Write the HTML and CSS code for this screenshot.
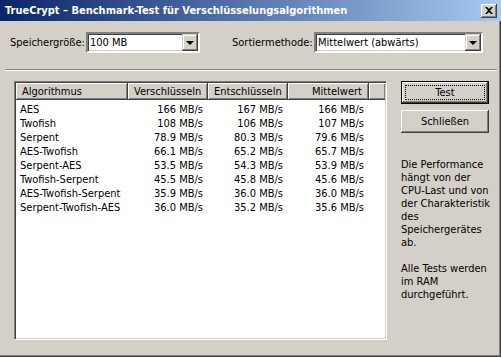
FILE: index.html
```html
<!DOCTYPE html>
<html lang="de">
<head>
    <meta charset="UTF-8">
    <title>TrueCrypt – Benchmark-Test für Verschlüsselungsalgorithmen</title>
    <link rel="stylesheet" href="styles.css">
</head>
<body>
    <div class="window">
        <div class="titlebar">
            <span class="title">TrueCrypt – Benchmark-Test für Verschlüsselungsalgorithmen</span>
            <button class="close">
                <svg width="8" height="7" viewBox="0 0 8 7"><path d="M0 0h2l2 2 2-2h2L5 3.5 8 7H6L4 5 2 7H0l3-3.5z" fill="#000"/></svg>
            </button>
        </div>

        <div class="options">
            <label class="label label-size">Speichergröße:</label>
            <div class="combo combo-size">
                <span class="combo-text">100 MB</span>
                <span class="combo-btn"><span class="arrow"></span></span>
            </div>
            <label class="label label-sort">Sortiermethode:</label>
            <div class="combo combo-sort">
                <span class="combo-text">Mittelwert (abwärts)</span>
                <span class="combo-btn"><span class="arrow"></span></span>
            </div>
        </div>

        <div class="separator"></div>

        <div class="main">
            <div class="listview">
                <table>
                    <thead>
                        <tr>
                            <th class="col-name">Algorithmus</th>
                            <th class="col-num">Verschlüsseln</th>
                            <th class="col-num">Entschlüsseln</th>
                            <th class="col-num col-last">Mittelwert</th>
                            <th class="col-fill"></th>
                        </tr>
                    </thead>
                    <tbody>
                        <tr><td>AES</td><td>166 MB/s</td><td>167 MB/s</td><td>166 MB/s</td><td></td></tr>
                        <tr><td>Twofish</td><td>108 MB/s</td><td>106 MB/s</td><td>107 MB/s</td><td></td></tr>
                        <tr><td>Serpent</td><td>78.9 MB/s</td><td>80.3 MB/s</td><td>79.6 MB/s</td><td></td></tr>
                        <tr><td>AES-Twofish</td><td>66.1 MB/s</td><td>65.2 MB/s</td><td>65.7 MB/s</td><td></td></tr>
                        <tr><td>Serpent-AES</td><td>53.5 MB/s</td><td>54.3 MB/s</td><td>53.9 MB/s</td><td></td></tr>
                        <tr><td>Twofish-Serpent</td><td>45.5 MB/s</td><td>45.8 MB/s</td><td>45.6 MB/s</td><td></td></tr>
                        <tr><td>AES-Twofish-Serpent</td><td>35.9 MB/s</td><td>36.0 MB/s</td><td>36.0 MB/s</td><td></td></tr>
                        <tr><td>Serpent-Twofish-AES</td><td>36.0 MB/s</td><td>35.2 MB/s</td><td>35.6 MB/s</td><td></td></tr>
                    </tbody>
                </table>
            </div>

            <div class="side">
                <button class="btn btn-default"><span class="focus">Test</span></button>
                <button class="btn">Schließen</button>
                <p class="info">
                    Die Performance<br>
                    hängt von der<br>
                    CPU-Last und von<br>
                    der Charakteristik<br>
                    des<br>
                    Speichergerätes<br>
                    ab.
                </p>
                <p class="info">
                    Alle Tests werden<br>
                    im RAM<br>
                    durchgeführt.
                </p>
            </div>
        </div>
    </div>
</body>
</html>
```

FILE: styles.css
```css
body {
    margin: 0;
    font-family: Tahoma, "DejaVu Sans Condensed", "Liberation Sans", sans-serif;
    font-size: 11px;
    color: #000;
    background-color: #d4d0c8;
}
.window {
    width: 501px;
    height: 357px;
    box-sizing: border-box;
    background-color: #d4d0c8;
    box-shadow: inset -1px -1px #404040, inset -2px -2px #808080;
    overflow: hidden;
}
.titlebar {
    height: 21px;
    display: flex;
    align-items: center;
    justify-content: space-between;
    padding: 0 4px 0 5px;
    background: linear-gradient(to right, #0a246a, #a6caf0);
}
.title {
    color: #fff;
    font-weight: bold;
    font-size: 11px;
}
.close {
    width: 16px;
    height: 14px;
    padding: 0;
    display: flex;
    align-items: center;
    justify-content: center;
    background-color: #d4d0c8;
    border: none;
    box-shadow: inset -1px -1px #404040, inset 1px 1px #fff, inset -2px -2px #808080;
}
/* Zeile mit den Auswahlfeldern */
.options {
    display: flex;
    align-items: center;
    margin-top: 11px;
    padding-left: 10px;
    height: 21px;
}
.label-size {
    width: 76px;
}
.label-sort {
    width: 82px;
    margin-left: 32px;
}
.combo {
    height: 21px;
    box-sizing: border-box;
    display: flex;
    align-items: center;
    background-color: #fff;
    border: 2px solid;
    border-color: #808080 #fff #fff #808080;
    box-shadow: inset 1px 1px #404040, inset -1px -1px #d4d0c8;
}
.combo-size {
    width: 114px;
}
.combo-sort {
    width: 169px;
}
.combo-text {
    flex: 1;
    padding-left: 2px;
}
.combo-btn {
    width: 16px;
    height: 17px;
    box-sizing: border-box;
    display: flex;
    align-items: center;
    justify-content: center;
    background-color: #d4d0c8;
    box-shadow: inset -1px -1px #404040, inset 1px 1px #d4d0c8, inset -2px -2px #808080, inset 2px 2px #fff;
}
.arrow {
    width: 0;
    height: 0;
    border-left: 4px solid transparent;
    border-right: 4px solid transparent;
    border-top: 4px solid #000;
    margin-top: 1px;
}
.separator {
    margin: 16px 4px 0 5px;
    border-top: 1px solid #808080;
    border-bottom: 1px solid #fff;
}
.main {
    display: flex;
    margin-top: 10px;
    padding-left: 14px;
}
/* Liste mit den Ergebnissen */
.listview {
    width: 373px;
    height: 259px;
    box-sizing: border-box;
    background-color: #fff;
    border: 1px solid;
    border-color: #808080 #fff #fff #808080;
    box-shadow: inset 1px 1px #404040, inset -1px -1px #d4d0c8;
    padding: 1px;
}
table {
    border-collapse: separate;
    border-spacing: 0;
    table-layout: fixed;
    width: 369px;
}
th {
    height: 17px;
    padding: 0 6px;
    font-weight: normal;
    background-color: #d4d0c8;
    box-sizing: border-box;
    box-shadow: inset 1px 1px #fff, inset -1px -1px #808080, inset -2px -2px #d4d0c8;
    border-right: 1px solid #404040;
    border-bottom: 1px solid #404040;
    white-space: nowrap;
    overflow: hidden;
}
.col-name {
    width: 112px;
    text-align: left;
}
.col-num {
    width: 80px;
    text-align: right;
}
.col-last {
    width: 81px;
}
.col-fill {
    border-right: none;
}
tbody tr:first-child td {
    padding-top: 3px;
}
td {
    height: 14px;
    line-height: 14px;
    padding: 0 5px 0 4px;
    text-align: right;
    white-space: nowrap;
}
td:first-child {
    text-align: left;
}
.side {
    margin-left: 14px;
    width: 88px;
}
.btn {
    display: block;
    width: 88px;
    height: 23px;
    margin-bottom: 6px;
    padding: 0;
    font-family: inherit;
    font-size: 11px;
    background-color: #d4d0c8;
    border: none;
    box-shadow: inset -1px -1px #404040, inset 1px 1px #fff, inset -2px -2px #808080;
}
.btn-default {
    border: 1px solid #000;
    display: flex;
    align-items: center;
    justify-content: center;
}
.focus {
    display: block;
    width: 78px;
    height: 13px;
    line-height: 13px;
    border: 1px dotted #000;
}
.info {
    margin: 0 0 13px 0;
    line-height: 13px;
    white-space: nowrap;
}
.side .btn + .btn + .info {
    margin-top: 25px;
}
```
